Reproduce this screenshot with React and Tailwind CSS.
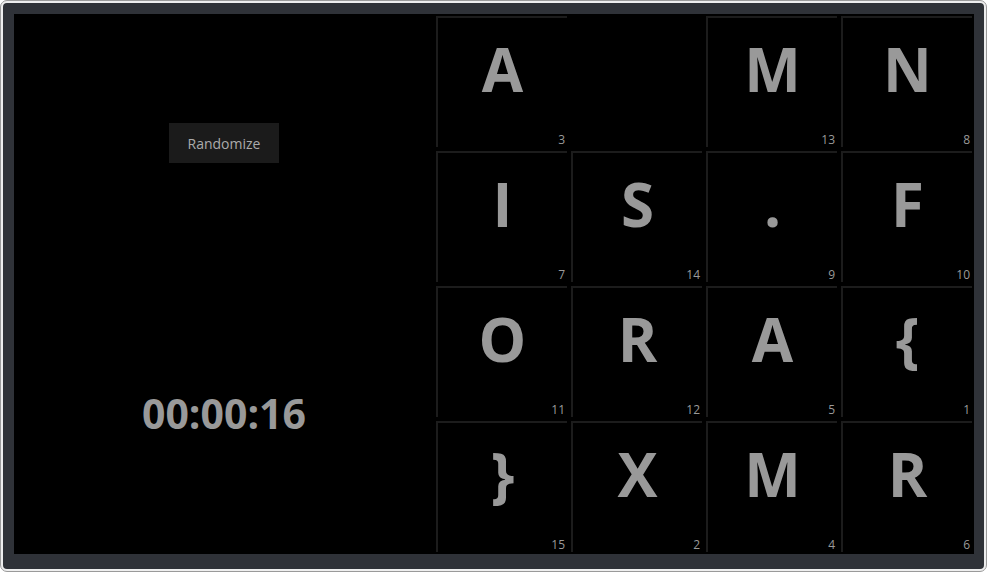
import React from "react";

const tiles = [
  ["A", 3], null, ["M", 13], ["N", 8],
  ["I", 7], ["S", 14], [".", 9], ["F", 10],
  ["O", 11], ["R", 12], ["A", 5], ["{", 1],
  ["}", 15], ["X", 2], ["M", 4], ["R", 6],
];

function Tile({ t }) {
  if (!t) return <div className="m-[2px] w-[131px] h-[131px]" />;
  return (
    <div className="m-[2px] w-[131px] h-[131px] border-l-2 border-t-2 border-[#1c1c1c] flex flex-col justify-between">
      <div className="pt-[6px] text-center text-[60px] font-bold text-[#999999] leading-normal">
        {t[0]}
      </div>
      <div className="text-right pr-[2px] text-[12px] leading-[15px] text-[#9a9a9a]">{t[1]}</div>
    </div>
  );
}

export default function App() {
  return (
    <div
      className="w-[987px] h-[572px] bg-[#eeeeee] border border-[#9a9a9a] rounded-[7px] p-[2px] overflow-hidden"
      style={{ fontFamily: '"Open Sans", "Noto Sans", sans-serif' }}
    >
      <div className="w-full h-full bg-[#2f3238] rounded-[4px] pl-[11px] pt-[11px] pr-[10px] pb-[15px]">
        <div className="w-[960px] h-[540px] bg-black flex">
          <div className="w-[420px] flex flex-col items-center">
            <button className="mt-[109px] w-[110px] h-[40px] bg-[#1b1b1b] text-[#ababab] text-[14px]">
              Randomize
            </button>
            <div className="mt-[220px] text-[41px] font-bold text-[#999999] leading-normal">
              00:00:16
            </div>
          </div>
          <div className="w-[540px] h-[540px] grid grid-cols-4">
            {tiles.map((t, i) => (
              <Tile key={i} t={t} />
            ))}
          </div>
        </div>
      </div>
    </div>
  );
}
